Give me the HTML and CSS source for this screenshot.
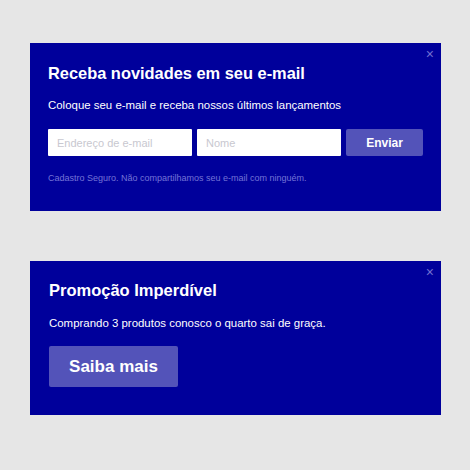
FILE: index.html
```html
<!DOCTYPE html>
<html>
<head>
<meta charset="utf-8">
<link rel="stylesheet" href="styles.css">
</head>
<body>
<div class="page">
  <section class="card card-news">
    <span class="close">&times;</span>
    <h2 class="title">Receba novidades em seu e-mail</h2>
    <p class="text">Coloque seu e-mail e receba nossos últimos lançamentos</p>
    <form class="form">
      <input class="field field-email" type="text" placeholder="Endereço de e-mail">
      <input class="field field-name" type="text" placeholder="Nome">
      <button class="btn btn-send" type="button">Enviar</button>
    </form>
    <p class="note">Cadastro Seguro. Não compartilhamos seu e-mail com ninguém.</p>
  </section>
  <section class="card card-promo">
    <span class="close">&times;</span>
    <h2 class="title title-promo">Promoção Imperdível</h2>
    <p class="text">Comprando 3 produtos conosco o quarto sai de graça.</p>
    <button class="btn btn-more" type="button">Saiba mais</button>
  </section>
</div>
</body>
</html>
```
FILE: styles.css
```css
html, body {
  margin: 0;
  padding: 0;
  background: #e6e6e6;
}
body {
  font-family: "Liberation Sans", Arial, sans-serif;
  color: #fff;
}
.page {
  display: flex;
  flex-direction: column;
  align-items: flex-start;
  padding: 43px 0 0 30px;
  gap: 50px;
}
.card {
  position: relative;
  box-sizing: border-box;
  width: 411px;
  background: #00009b;
  padding: 0 18px;
}
.card-news {
  height: 168px;
  padding-top: 20px;
}
.card-promo {
  height: 154px;
  padding-top: 19px;
  padding-left: 19px;
}
.close {
  position: absolute;
  top: 4px;
  right: 7px;
  font-size: 14px;
  color: #6f6fd0;
  line-height: 1;
}
.title {
  margin: 0;
  font-size: 16.4px;
  font-weight: bold;
  line-height: 20px;
}
.title-promo {
  font-size: 16.5px;
}
.text {
  margin: 15px 0 0;
  font-size: 11.45px;
  line-height: 15px;
}
.card-promo .text {
  margin-top: 16px;
}
.form {
  display: flex;
  gap: 5px;
  margin-top: 16px;
}
.field {
  box-sizing: border-box;
  width: 144px;
  height: 27px;
  border: 0;
  border-radius: 1px;
  padding: 0 9px;
  font-family: "Liberation Sans", Arial, sans-serif;
  font-size: 11px;
  background: #fff;
  outline: none;
}
.field::placeholder {
  color: #c8c8d0;
}
.btn {
  border: 0;
  border-radius: 2px;
  background: #5353b9;
  color: #fff;
  font-family: "Liberation Sans", Arial, sans-serif;
  font-weight: bold;
}
.btn-send {
  width: 78px;
  height: 27px;
  font-size: 12px;
}
.note {
  margin: 17px 0 0;
  font-size: 9px;
  color: #7474d6;
}
.btn-more {
  margin-top: 15px;
  width: 129px;
  height: 41px;
  font-size: 17px;
}
```
